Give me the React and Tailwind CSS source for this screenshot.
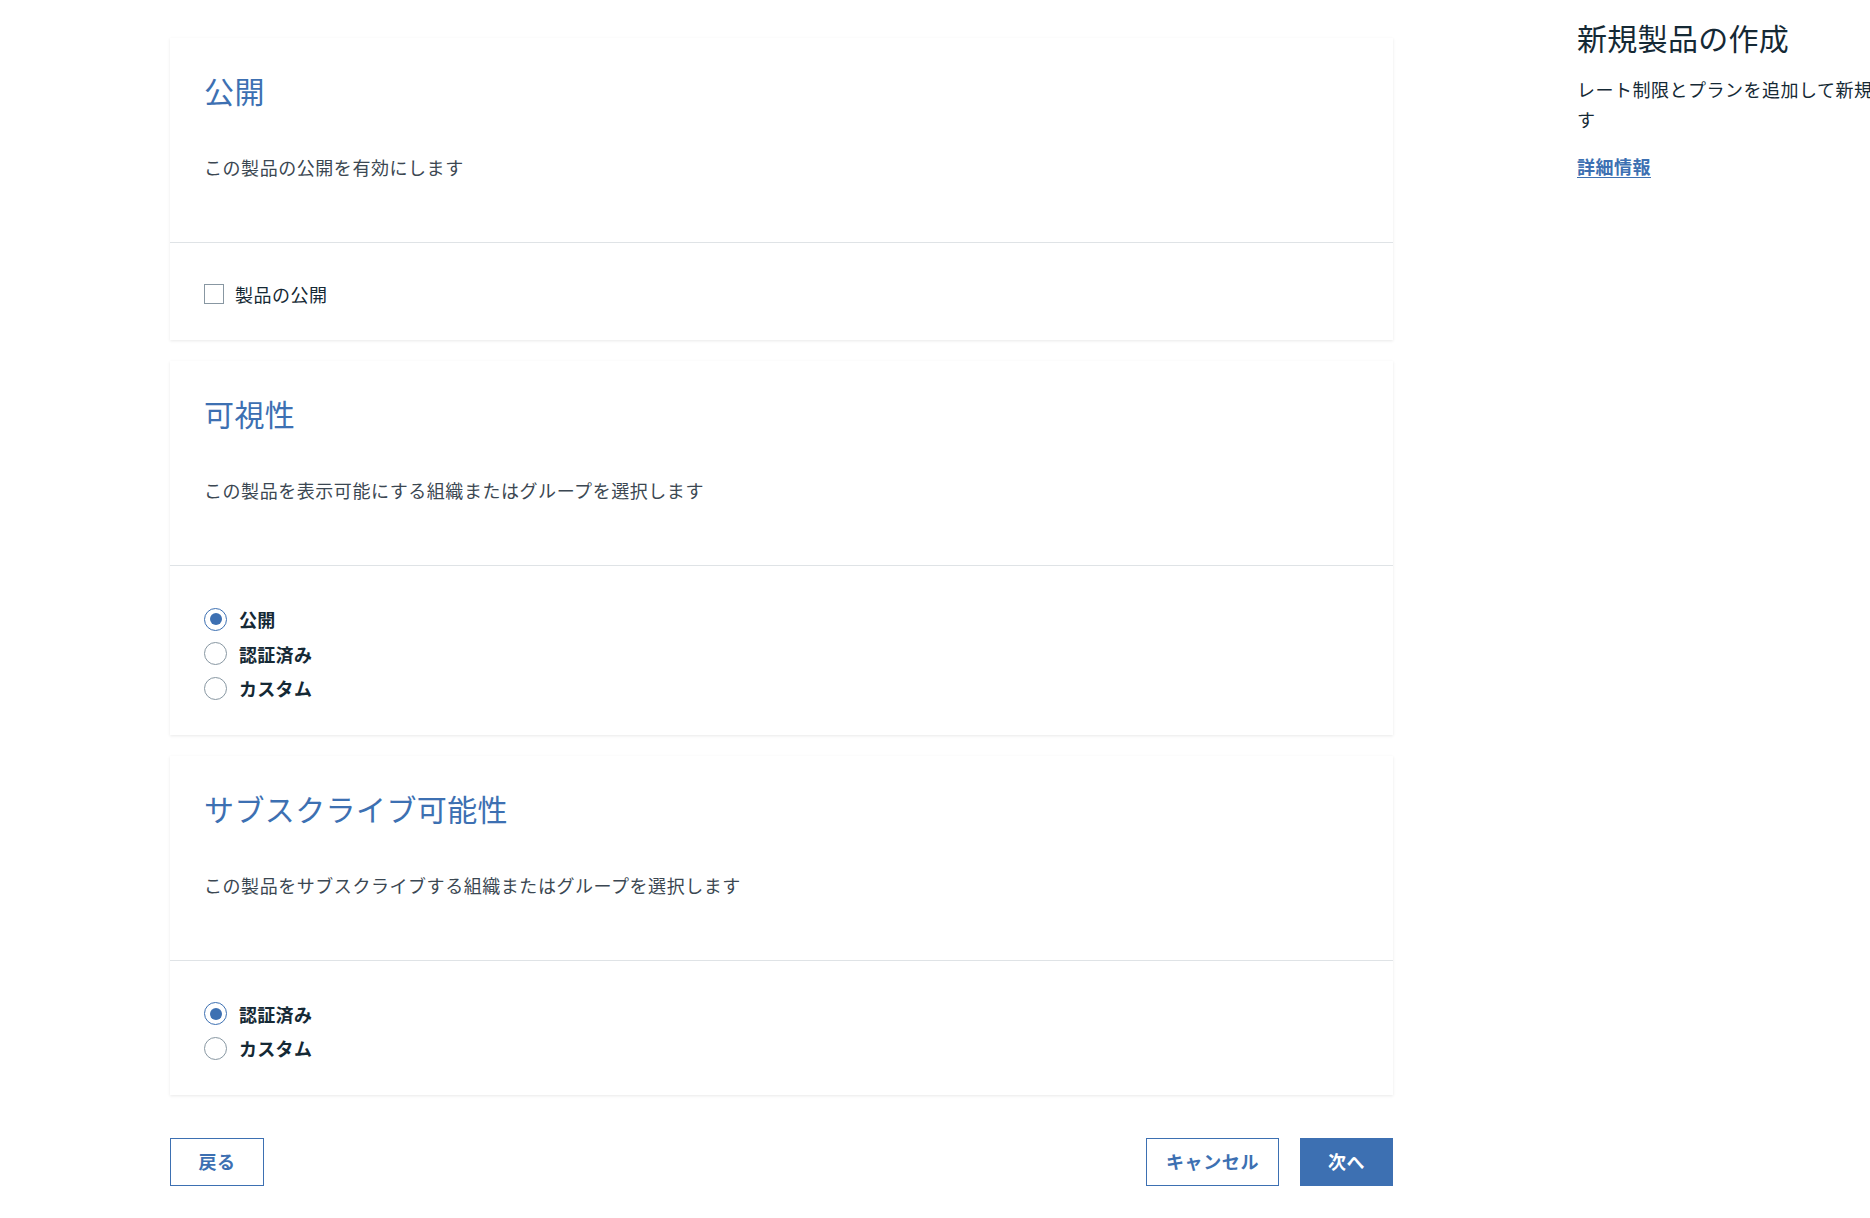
import React from "react";

const FONT = "font-['Noto_Sans_CJK_JP','Noto_Sans',sans-serif]";

function Radio({ checked, label }) {
  return (
    <div className="flex h-[34.5px] items-center">
      <span
        className={
          "flex h-[23px] w-[23px] shrink-0 items-center justify-center rounded-full border bg-white " +
          (checked ? "border-[#3d70b2]" : "border-[#8897a2]")
        }
      >
        {checked && <span className="h-[12px] w-[12px] rounded-full bg-[#3d70b2]" />}
      </span>
      <span className="ml-[12px] text-[18px] font-bold leading-[24px] tracking-[0.3px] text-[#152935]">{label}</span>
    </div>
  );
}

function Card({ title, desc, children }) {
  return (
    <section className="bg-white shadow-[0_1px_3px_0_rgba(0,0,0,0.09)]">
      <div className="pl-[34px] pr-8 pt-[33px] pb-[63px]">
        <h2 className="text-[30px] font-normal leading-[38px] tracking-[0.4px] text-[#3d70b2]">{title}</h2>
        <p className="mt-[46px] text-[18px] leading-[24px] tracking-[0.55px] text-[#3b4752]">{desc}</p>
      </div>
      <div className="h-px bg-[#dfe3e6]" />
      {children}
    </section>
  );
}

export default function App() {
  return (
    <div className={"flex h-[1218px] w-[1870px] overflow-hidden bg-white " + FONT}>
      <main className="ml-[170px] w-[1223px] shrink-0 pt-[38px]">
        <div className="flex flex-col gap-[21px]">
          <Card title="公開" desc="この製品の公開を有効にします">
            <div className="pl-[34px] pr-8 pt-[34px] pb-[29px]">
              <label className="flex h-[34px] items-center">
                <span className="h-[20px] w-[20px] shrink-0 border border-[#8897a2] bg-white" />
                <span className="ml-[11px] text-[18px] leading-[24px] tracking-[0.5px] text-[#152935]">製品の公開</span>
              </label>
            </div>
          </Card>
          <Card title="可視性" desc="この製品を表示可能にする組織またはグループを選択します">
            <div className="pl-[34px] pr-8 pt-[36px] pb-[29px]">
              <Radio checked label="公開" />
              <Radio label="認証済み" />
              <Radio label="カスタム" />
            </div>
          </Card>
          <Card title="サブスクライブ可能性" desc="この製品をサブスクライブする組織またはグループを選択します">
            <div className="pl-[34px] pr-8 pt-[36px] pb-[29px]">
              <Radio checked label="認証済み" />
              <Radio label="カスタム" />
            </div>
          </Card>
        </div>
        <div className="mt-[43px] flex items-center">
          <button className="flex h-[48px] w-[94px] items-center justify-center border border-[#3d70b2] bg-white text-[18px] font-bold tracking-[0.6px] text-[#3d70b2]">
            戻る
          </button>
          <div className="ml-auto flex items-center gap-[21px]">
            <button className="flex h-[48px] w-[133px] items-center justify-center border border-[#3d70b2] bg-white text-[18px] font-bold tracking-[0.6px] text-[#3d70b2]">
              キャンセル
            </button>
            <button className="flex h-[48px] w-[93px] items-center justify-center bg-[#3d70b2] text-[18px] font-bold tracking-[0.6px] text-white">
              次へ
            </button>
          </div>
        </div>
      </main>
      <aside className="ml-[184px] w-[440px] shrink-0 pt-[19px]">
        <h1 className="text-[30px] font-normal leading-[36px] tracking-[0.3px] text-[#152935]">新規製品の作成</h1>
        <p className="mt-[19px] w-[428px] text-[18px] leading-[30px] tracking-[0.5px] text-[#152935]">
          レート制限とプランを追加して新規製品を作成します
        </p>
        <a href="#" className="mt-[17px] block text-[18px] font-bold leading-[30px] tracking-[0.5px] text-[#3d70b2] underline underline-offset-[3px]">
          詳細情報
        </a>
      </aside>
    </div>
  );
}
